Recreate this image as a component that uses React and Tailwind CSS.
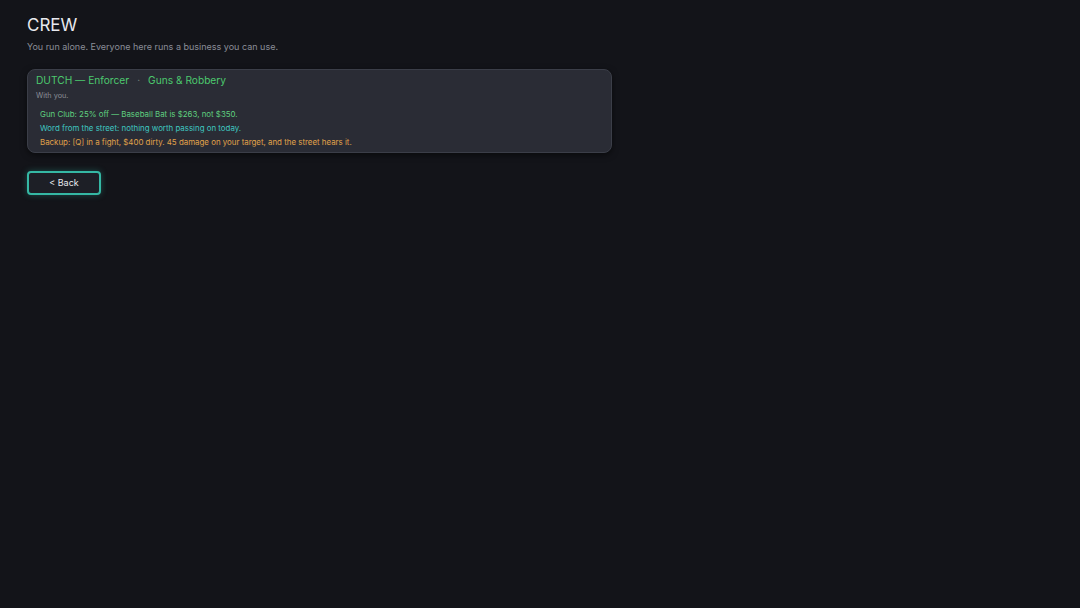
import React from "react";

const perks = [
  { text: "Gun Club: 25% off — Baseball Bat is $263, not $350.", color: "text-[#5fcf7f]" },
  { text: "Word from the street: nothing worth passing on today.", color: "text-[#3fc7c0]" },
  { text: "Backup: [Q] in a fight, $400 dirty. 45 damage on your target, and the street hears it.", color: "text-[#e0a24a]" },
];

export default function App() {
  return (
    <div
      className="min-h-[608px] w-full bg-[#131419] px-[27px] pt-[13px]"
      style={{ fontFamily: "Inter, 'Liberation Sans', sans-serif" }}
    >
      <h1 className="text-[17px] leading-[24px] text-[#e8e9ee]">CREW</h1>
      <p className="mt-[3px] text-[9px] leading-[14px] text-[#8a8d97]">
        You run alone. Everyone here runs a business you can use.
      </p>

      <div className="mt-[15px] w-[585px] rounded-[8px] border border-[#3b3e48] bg-[#2a2c35] px-[8px] pt-[2px] pb-[3px] shadow-[0_2px_6px_rgba(0,0,0,0.5)]">
        <div className="text-[10.2px] leading-[16px] text-[#4cc96e]">
          DUTCH — Enforcer
          <span className="mx-[8px] text-[#7b8a80]">·</span>
          Guns &amp; Robbery
        </div>
        <div className="mt-[1px] text-[7.3px] leading-[14px] text-[#8a8d97]">With you.</div>
        <div className="mt-[4px] flex flex-col pl-[4px]">
          {perks.map((p, i) => (
            <div key={i} className={`text-[7.9px] leading-[14px] ${p.color}`}>
              {p.text}
            </div>
          ))}
        </div>
      </div>

      <button className="mt-[18px] h-[24px] w-[74px] rounded-[4px] border-2 border-[#35b8a4] bg-[#1d1f26] text-[9px] text-[#e8e9ee] shadow-[0_0_6px_rgba(53,184,164,0.35)]">
        &lt; Back
      </button>
    </div>
  );
}
